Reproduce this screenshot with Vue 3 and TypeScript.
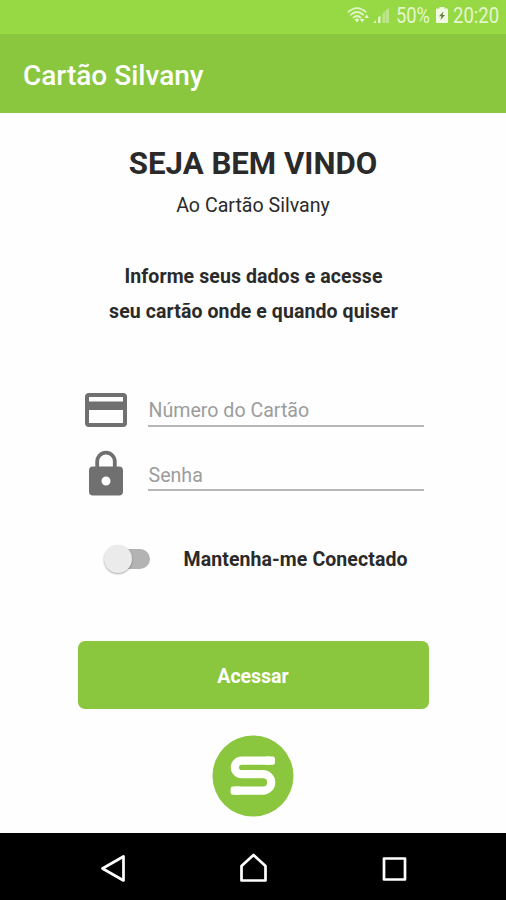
<script setup lang="ts">
import { ref } from 'vue'

const cardNumber = ref('')
const password = ref('')
const stayConnected = ref(false)
</script>

<template>
  <div class="screen">
    <div class="status">
      <svg class="wifi" width="24" height="20" viewBox="0 0 24 20">
        <g fill="none" stroke="#e2f5c8" stroke-width="1.7">
          <path d="M0.8 6.4Q10 -2.2 19.2 6.4" />
          <path d="M3.3 9.2Q10 2.8 16.7 9.2" />
          <path d="M5.9 12Q10 8 14.2 12" />
        </g>
        <path d="M7.6 13.6Q10 11.4 12.4 13.6L10 16.4Z" fill="#e2f5c8" />
        <path d="M13 13h4.400l-2.200 3.500zM17.500 12h4.400l-2.200-3.500z" fill="#e9f7d4" />
      </svg>
      <svg class="signal" width="17" height="16" viewBox="0 0 17 16">
        <path d="M0 15l3-3v3zM5 15V9.500l2.500-2V15z" fill="#e2f5c8" />
        <path d="M9.500 15V5.500L12 3.500V15zM12.500 15V2.500L16 0v15z" fill="#bde58a" />
      </svg>
      <span class="pct">50%</span>
      <svg class="battery" width="12" height="16" viewBox="0 0 12 16">
        <path d="M3.500 0h5v1.500H11q1 0 1 1V15q0 1-1 1H1q-1 0-1-1V2.500q0-1 1-1h2.500z" fill="#f0f9e2" />
        <path d="M7.500 4.500L3 9.300h2.500L4.500 13L9 8H6.500z" fill="#5f7e40" />
      </svg>
      <span class="time">20:20</span>
    </div>
    <header class="bar"><span>Cartão Silvany</span></header>
    <main class="content">
      <h1>SEJA BEM VINDO</h1>
      <p class="sub">Ao Cartão Silvany</p>
      <p class="info">Informe seus dados e acesse<br />seu cartão onde e quando quiser</p>
      <form class="form" @submit.prevent>
        <label class="field">
          <svg width="44" height="36" viewBox="0 0 44 36">
            <path fill="#707070" fill-rule="evenodd" d="M5 1H39Q43 1 43 5V31Q43 35 39 35H5Q1 35 1 31V5Q1 1 5 1ZM5 5V9.500H39V5ZM5 18V31H39V18Z" />
          </svg>
          <input v-model="cardNumber" type="text" placeholder="Número do Cartão" />
        </label>
        <label class="field second">
          <svg width="44" height="46" viewBox="0 0 44 46">
            <path d="M13.200 18V11.500a8.800 8.800 0 0 1 17.600 0V18" fill="none" stroke="#707070" stroke-width="3.800" />
            <path fill="#707070" fill-rule="evenodd" d="M9 16.500H35Q39 16.500 39 20.500V41.500Q39 45.500 35 45.500H9Q5 45.500 5 41.500V20.500Q5 16.500 9 16.500ZM22 26.500a4.500 4.500 0 1 0 0 9a4.500 4.500 0 1 0 0-9Z" />
          </svg>
          <input v-model="password" type="password" placeholder="Senha" />
        </label>
        <label class="keep">
          <input v-model="stayConnected" type="checkbox" />
          <span class="switch" :class="{ on: stayConnected }"><i></i></span>
          <span class="keep-text">Mantenha-me Conectado</span>
        </label>
        <button type="submit">Acessar</button>
      </form>
      <svg class="logo" width="82" height="82" viewBox="0 0 82 82">
        <circle cx="41" cy="41" r="40.500" fill="#8ac73f" />
        <path d="M58 25.600H29.700a6.800 6.800 0 0 0 0 13.600H51a8.200 8.200 0 0 1 0 16.400H23" fill="none" stroke="#fff" stroke-width="8.200" />
        <rect x="53" y="21.500" width="10" height="8.200" rx="2.200" fill="#fff" />
        <rect x="18.600" y="51.500" width="10" height="8.200" rx="2.200" fill="#fff" />
      </svg>
    </main>
    <nav class="nav">
      <svg width="506" height="66" viewBox="0 0 506 66" fill="none" stroke="#fff" stroke-width="2.700" stroke-linejoin="round">
        <path d="M102.500 35.500L123.500 23.500V47.500Z" />
        <path d="M241.500 33L253.500 22L265.500 33V47.500H241.500Z" />
        <path d="M384 25.500H405V46.500H384Z" />
      </svg>
    </nav>
  </div>
</template>

<style>
body {
  margin: 0;
  background: #fefefe;
}
</style>

<style scoped>
.screen {
  width: 506px;
  height: 900px;
  display: flex;
  flex-direction: column;
  overflow: hidden;
  background: #fefefe;
  color: #2a2a2a;
  font-family: Roboto, sans-serif;
}
.status {
  height: 34px;
  flex: none;
  display: flex;
  box-sizing: border-box;
  padding-left: 347px;
  background: #96d945;
  color: #e6f6cf;
  font-size: 22px;
  line-height: 31px;
}
.status svg {
  flex: none;
}
.wifi {
  margin-top: 6px;
}
.signal {
  margin: 8px 0 0 2px;
}
.pct,
.time {
  transform-origin: 0 50%;
  white-space: nowrap;
}
.pct {
  width: 33px;
  margin-left: 6px;
  transform: scaleX(0.83);
}
.battery {
  margin: 7px 0 0 7px;
}
.time {
  margin-left: 5px;
  transform: scaleX(0.84);
}
.bar {
  height: 79px;
  flex: none;
  display: flex;
  align-items: center;
  box-sizing: border-box;
  padding: 4px 0 0 23px;
  background: #8ac73f;
  color: #fff;
  font-size: 28px;
  font-weight: 500;
}
.content {
  flex: 1;
  display: flex;
  flex-direction: column;
  align-items: center;
}
h1 {
  margin: 31px 0 0;
  font-size: 31.2px;
  line-height: 40px;
  font-weight: 700;
}
.sub {
  margin: 10px 0 0;
  font-size: 19.6px;
  line-height: 24px;
}
.info {
  margin: 41px 0 0;
  padding-left: 1px;
  text-align: center;
  font-size: 19.5px;
  line-height: 35px;
  font-weight: 700;
  letter-spacing: 0.09px;
}
.form {
  width: 351px;
  margin-top: 60px;
}
.field {
  height: 38px;
  display: flex;
  align-items: flex-end;
  padding: 0 5px 0 6px;
}
.field svg {
  flex: none;
  margin-bottom: -1px;
}
.field input {
  flex: 1;
  min-width: 0;
  height: 36px;
  box-sizing: border-box;
  margin-left: 20px;
  padding: 4px 0 0 1px;
  border: 0;
  border-bottom: 2px solid #b7b7b7;
  outline: 0;
  background: none;
  font: 19.6px Roboto, sans-serif;
}
.field input::placeholder {
  color: #9c9c9c;
  opacity: 1;
}
.second {
  height: 64px;
}
.second svg {
  margin-bottom: -5px;
}
.second input {
  padding-top: 6px;
}
.keep {
  height: 34px;
  margin-top: 51px;
  display: flex;
  align-items: center;
  padding-left: 26px;
}
.keep input {
  appearance: none;
  width: 0;
  height: 0;
  margin: 0;
}
.switch {
  width: 46px;
  height: 20px;
  display: flex;
  align-items: center;
  border-radius: 10px;
  background: linear-gradient(90deg, transparent 12px, #b3b3b3 12px);
}
.switch i {
  width: 28px;
  height: 28px;
  flex: none;
  border-radius: 50%;
  background: #ebebeb;
  box-shadow: 0 1px 2px #00000055;
}
.switch.on i {
  margin-left: 18px;
}
.keep-text {
  margin-left: 34px;
  font-size: 19.5px;
  font-weight: 700;
  letter-spacing: 0.09px;
}
button {
  display: block;
  width: 351px;
  height: 68px;
  margin-top: 65px;
  padding: 2px 0 0;
  border: 0;
  border-radius: 7px;
  background: #8ac73f;
  color: #fff;
  font: 700 19.5px Roboto, sans-serif;
}
.logo {
  margin-top: 26px;
}
.nav {
  height: 67px;
  flex: none;
  background: #000;
}
.nav svg {
  display: block;
}
</style>
